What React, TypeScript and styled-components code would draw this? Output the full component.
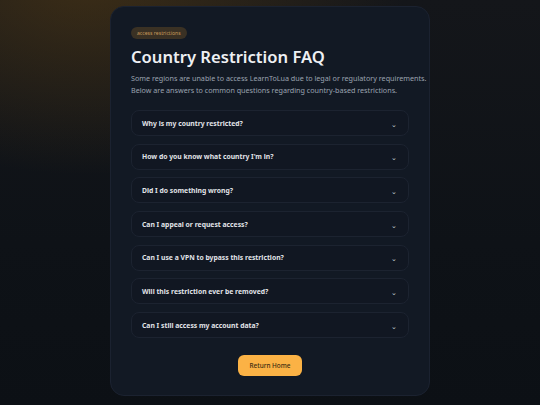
import React from "react";
import styled, { createGlobalStyle } from "styled-components";

const Global = createGlobalStyle`
  html, body { margin: 0; padding: 0; }
  body {
    width: 540px;
    height: 405px;
    overflow: hidden;
    font-family: "Noto Sans", "Open Sans", sans-serif;
    background: #0d1116;
  }
`;

const Page = styled.div`
  width: 540px;
  height: 405px;
  box-sizing: border-box;
  padding-top: 6px;
  display: flex;
  justify-content: center;
  align-items: flex-start;
  background:
    radial-gradient(ellipse 420px 260px at 90px -20px, rgba(92, 64, 20, 0.55), rgba(92, 64, 20, 0) 75%),
    linear-gradient(180deg, #14161a 0%, #0e1217 60%, #0c1015 100%);
`;

const Card = styled.main`
  width: 320px;
  box-sizing: border-box;
  padding: 20px 20px 19px;
  background: #121924;
  border: 1px solid #1b2230;
  border-radius: 14px;
  display: flex;
  flex-direction: column;
  align-items: flex-start;
`;

const Badge = styled.span`
  display: inline-flex;
  align-items: center;
  height: 12px;
  padding: 0 6px;
  border-radius: 999px;
  background: #3a3124;
  color: #c89a5a;
  font-size: 5.1px;
  line-height: 12px;
`;

const Title = styled.h1`
  margin: 8px 0 0;
  font-size: 16.6px;
  line-height: 20px;
  font-weight: 600;
  color: #eef0f3;
`;

const Lead = styled.p`
  margin: 5px 0 0;
  font-size: 7.2px;
  line-height: 12px;
  color: #9ba3b0;
  white-space: nowrap;
`;

const List = styled.div`
  margin-top: 14px;
  width: 100%;
  display: flex;
  flex-direction: column;
  gap: 7.7px;
`;

const Item = styled.div`
  height: 26px;
  box-sizing: border-box;
  padding: 0 11px 0 10px;
  display: flex;
  align-items: center;
  justify-content: space-between;
  border: 1px solid #1c2330;
  border-radius: 8px;
  background: #111722;
`;

const Question = styled.span`
  font-size: 6.8px;
  font-weight: 700;
  color: #e1e4e9;
`;

const Chevron = styled.span`
  font-size: 7px;
  color: #c9ced6;
  line-height: 1;
  transform: translateY(1px);
`;

const Footer = styled.div`
  width: 100%;
  display: flex;
  justify-content: center;
  margin-top: 17px;
`;

const Button = styled.button`
  width: 64px;
  height: 21px;
  border: none;
  border-radius: 6px;
  background: #fbb245;
  color: #3a2a10;
  font-family: "Noto Sans", sans-serif;
  font-size: 6.4px;
  font-weight: 500;
  padding: 0;
  cursor: pointer;
`;

const questions = [
  "Why is my country restricted?",
  "How do you know what country I'm in?",
  "Did I do something wrong?",
  "Can I appeal or request access?",
  "Can I use a VPN to bypass this restriction?",
  "Will this restriction ever be removed?",
  "Can I still access my account data?",
];

export default function App() {
  return (
    <>
      <Global />
      <Page>
        <Card>
          <Badge>access restrictions</Badge>
          <Title>Country Restriction FAQ</Title>
          <Lead>
            Some regions are unable to access LearnToLua due to legal or regulatory requirements.
            <br />
            Below are answers to common questions regarding country-based restrictions.
          </Lead>
          <List>
            {questions.map((q) => (
              <Item key={q}>
                <Question>{q}</Question>
                <Chevron>⌄</Chevron>
              </Item>
            ))}
          </List>
          <Footer>
            <Button>Return Home</Button>
          </Footer>
        </Card>
      </Page>
    </>
  );
}
